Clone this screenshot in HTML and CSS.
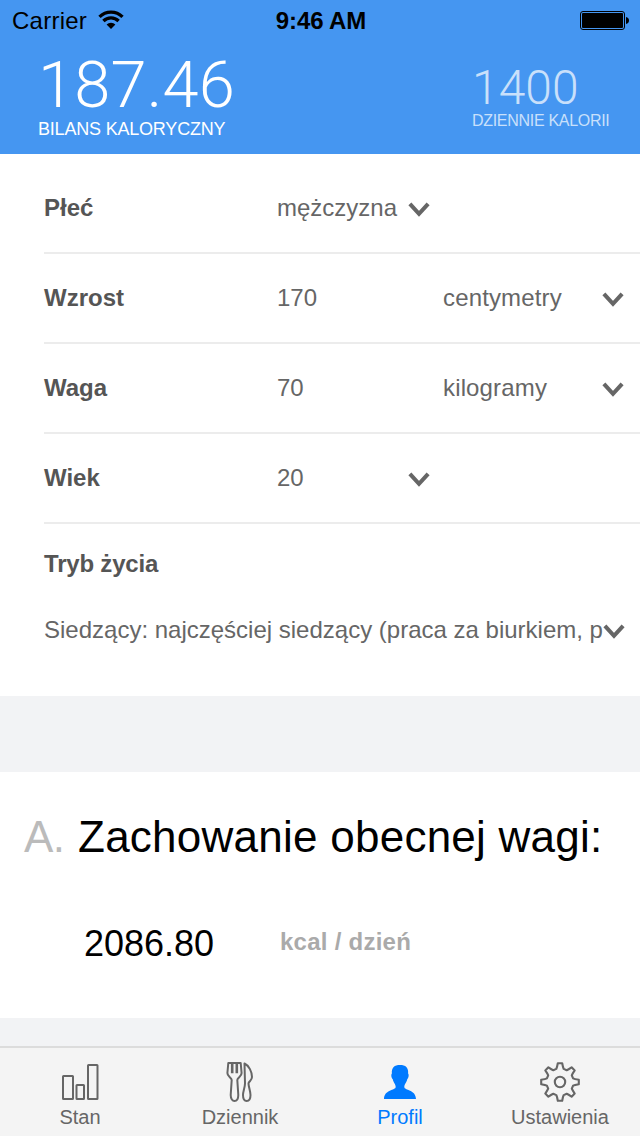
FILE: index.html
```html
<!DOCTYPE html>
<html lang="pl">
<head>
<meta charset="utf-8">
<title>Profil</title>
<link rel="stylesheet" href="styles.css">
</head>
<body>
<div class="app">
  <header class="header">
    <div class="status">
      <div class="carrier"><span class="carrier-name">Carrier</span>
        <svg class="wifi" width="26" height="20" viewBox="0 0 26 20"><g fill="none" stroke="#000" stroke-width="3.300"><path d="M1.500 6.800a16.300 16.300 0 0 1 23 0"/><path d="M5.400 11a10.800 10.800 0 0 1 15.200 0"/></g><path d="M8.600 14.600a6.400 6.400 0 0 1 8.800 0L13 19z"/></svg>
      </div>
      <div class="time">9:46 AM</div>
      <svg class="battery" width="50" height="20" viewBox="0 0 50 20"><rect x=".5" y=".5" width="44" height="18" rx="2.500" fill="none" stroke="#000"/><rect x="2" y="2" width="41" height="15" rx="1"/><path d="M46 6c2 .3 3 1.800 3 3.500s-1 3.200-3 3.500z"/></svg>
    </div>
    <div class="stats">
      <div class="stat balance"><div class="num">187.46</div><div class="cap">BILANS KALORYCZNY</div></div>
      <div class="stat daily"><div class="num">1400</div><div class="cap">DZIENNIE KALORII</div></div>
    </div>
  </header>

  <main>
    <section class="form">
      <div class="row"><label>Płeć</label><span class="value">mężczyzna</span><svg class="chev" viewBox="0 0 20 14"><path d="M1.500 1.800 10 11 18.500 1.800"/></svg></div>
      <div class="row"><label>Wzrost</label><span class="value wide">170</span><span class="unit">centymetry</span><svg class="chev" viewBox="0 0 20 14"><path d="M1.500 1.800 10 11 18.500 1.800"/></svg></div>
      <div class="row"><label>Waga</label><span class="value wide">70</span><span class="unit">kilogramy</span><svg class="chev" viewBox="0 0 20 14"><path d="M1.500 1.800 10 11 18.500 1.800"/></svg></div>
      <div class="row"><label>Wiek</label><span class="value">20</span><svg class="chev" viewBox="0 0 20 14"><path d="M1.500 1.800 10 11 18.500 1.800"/></svg></div>
      <div class="lifestyle">
        <label>Tryb życia</label>
        <div class="select"><span class="choice">Siedzący: najczęściej siedzący (praca za biurkiem, p</span><svg class="chev" viewBox="0 0 20 14"><path d="M1.500 1.800 10 11 18.500 1.800"/></svg></div>
      </div>
    </section>
    <section class="result">
      <h2><span class="letter">A.</span><span class="title">Zachowanie obecnej wagi:</span></h2>
      <div class="amount"><span class="kcal">2086.80</span><span class="per">kcal / dzień</span></div>
    </section>
  </main>

  <nav class="tabs">
    <a class="tab"><svg width="44" height="44" viewBox="0 0 44 44" fill="none" stroke="#666" stroke-width="2"><rect x="5" y="14" width="10" height="23" rx=".5"/><rect x="18.500" y="23" width="7.500" height="14" rx=".5"/><rect x="30" y="3" width="9.500" height="34" rx=".5"/></svg><span>Stan</span></a>
    <a class="tab"><svg width="44" height="44" viewBox="0 0 44 44" fill="none" stroke="#666" stroke-width="2" stroke-linejoin="round"><path d="M10.300 1H22.700L23.600 11C23.800 14.500 19.500 15.500 19.300 18L20.300 33C20.300 37 18.500 39 16.500 39S12.700 37 12.700 33L13.700 18C13.500 15.500 9.200 14.500 9.400 11Z"/><path stroke-width="2.600" d="M14.200 1V11.300M18.800 1V11.300"/><path d="M26.500 1.500C31 3.500 34 10 34 15C34 18.500 30.500 19.500 30.500 21.500C30.500 24.500 32.500 29 32.500 33C32.500 37 30.700 39 28.700 39S25 37 25 33C25 29.500 27 25 27 21.500Z"/></svg><span>Dziennik</span></a>
    <a class="tab active"><svg width="44" height="44" viewBox="0 0 44 44"><path fill="#007aff" d="M22 3C27.500 3 30.600 5.500 30.100 11.500C31.200 12.500 30.500 16.500 29.300 17C28.800 20.500 26.300 22 26.300 25C26.300 28.500 38 27.500 38 37H6C6 27.500 17.700 28.500 17.700 25C17.700 22 15.200 20.500 14.700 17C13.500 16.500 12.800 12.500 13.900 11.500C13.400 5.500 16.500 3 22 3Z"/></svg><span>Profil</span></a>
    <a class="tab"><svg width="44" height="44" viewBox="0 0 44 44" fill="none" stroke="#666" stroke-width="2.100" stroke-linejoin="round"><circle cx="22" cy="20" r="5.200"/><path d="M19.800 1.200H24.200Q25 5.600 25.700 6.900L28.700 8.200Q30.200 7.600 33.600 5.300L36.700 8.400Q34.400 11.800 33.800 13.300L35.100 16.300Q36.400 17 40.800 17.800V22.200Q36.400 23 35.100 23.700L33.800 26.700Q34.400 28.200 36.700 31.600L33.600 34.700Q30.200 32.400 28.700 31.800L25.700 33.100Q25 34.400 24.200 38.800H19.800Q19 34.400 18.300 33.100L15.300 31.800Q13.800 32.400 10.400 34.700L7.300 31.600Q9.600 28.200 10.200 26.700L8.900 23.700Q7.600 23 3.200 22.200V17.800Q7.600 17 8.900 16.300L10.200 13.300Q9.600 11.800 7.300 8.400L10.400 5.300Q13.800 7.600 15.300 8.200L18.300 6.900Q19 5.600 19.800 1.200Z"/></svg><span>Ustawienia</span></a>
  </nav>
</div>
</body>
</html>
```
FILE: styles.css
```css
* { box-sizing: border-box; }
body { margin: 0; font-family: "Liberation Sans", Arial, sans-serif; }
.app { width: 640px; height: 1136px; display: flex; flex-direction: column; background: #f2f3f5; overflow: hidden; }

.header { height: 154px; flex: none; background: #4596f1; }
.status { height: 42px; padding: 0 10px 0 12px; display: grid; grid-template-columns: 1fr auto 1fr; align-items: center; font-size: 24px; line-height: 42px; }
.carrier { display: flex; align-items: center; gap: 11px; }
.carrier-name { letter-spacing: .25px; }
.wifi { margin-top: -3px; }
.time { font-weight: bold; letter-spacing: -.1px; }
.battery { justify-self: end; margin-top: -1px; }
.stats { display: flex; justify-content: space-between; padding: 11px 24px 0 38px; color: #fff; }
.num { font-family: Roboto, sans-serif; font-weight: 300; white-space: nowrap; }
.cap { white-space: nowrap; }
.balance .num { font-size: 65px; line-height: 65px; letter-spacing: .2px; }
.balance .cap { font-size: 18px; line-height: 22px; letter-spacing: -.2px; }
.daily { width: 144px; padding-top: 11px; color: #c9e0fb; }
.daily .num { font-size: 48px; line-height: 48px; }
.daily .cap { font-size: 16px; line-height: 18px; letter-spacing: -.3px; }

.form { height: 542px; padding: 10px 0 0 44px; background: #fff; color: #666; font-size: 24px; }
.row { height: 90px; border-bottom: 2px solid #ececec; display: flex; align-items: center; }
label { font-weight: bold; color: #555; }
.row label { width: 233px; }
.value { width: 131px; }
.value.wide { width: 166px; }
.unit { width: 159px; letter-spacing: .15px; }
.chev { width: 22px; height: 15px; flex: none; margin-top: 3px; fill: none; stroke: #666; stroke-width: 3.800; }
.lifestyle { padding: 24px 15px 0 0; line-height: 32px; }
.lifestyle label { display: block; letter-spacing: -.2px; }
.select { display: flex; align-items: center; margin-top: 34px; }
.choice { flex: 1; min-width: 0; white-space: nowrap; }

.result { height: 246px; margin-top: 76px; padding: 40px 0 0 24px; background: #fff; }
h2 { margin: 0; display: flex; font-size: 44px; line-height: 50px; font-weight: normal; color: #000; }
.letter { width: 54px; color: #bbb; letter-spacing: -.7px; }
.title { letter-spacing: .25px; white-space: nowrap; }
.amount { display: flex; padding: 61px 0 0 60px; line-height: 42px; }
.kcal { width: 196px; font-size: 36px; }
.per { font-size: 24px; line-height: 37px; font-weight: bold; letter-spacing: .25px; color: #aaa; }

.tabs { height: 90px; margin-top: auto; flex: none; border-top: 2px solid #dcdcdc; background: #f4f4f4; display: grid; grid-template-columns: repeat(4, 1fr); }
.tab { display: flex; flex-direction: column; align-items: center; padding-top: 14px; color: #666; font-size: 20px; line-height: 22px; }
.tab.active { color: #007aff; }
```
